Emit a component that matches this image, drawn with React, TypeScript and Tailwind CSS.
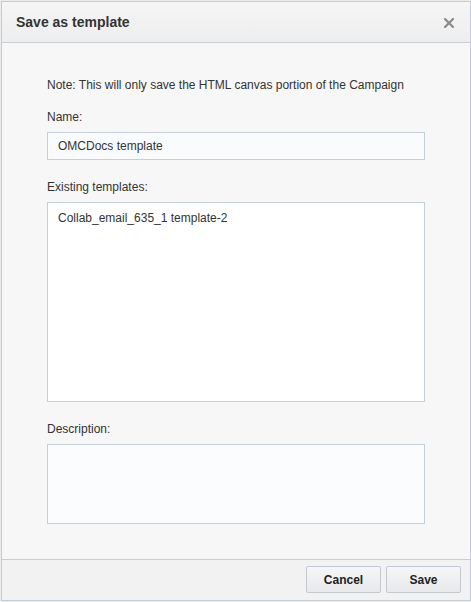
import React from 'react';

const font = { fontFamily: '"Liberation Sans", Arial, sans-serif' };

const SaveTemplateDialog: React.FC = () => {
  return (
    <div className="w-[471px] h-[602px] bg-[#ececec] overflow-hidden" style={font}>
      <div className="mt-[1px] ml-[1px] w-[470px] h-[600px] flex flex-col border border-[#c3cbd3] bg-[#f7f7f7] text-[#333]">
        {/* header */}
        <div className="h-[41px] shrink-0 flex items-center justify-between pl-[14px] pr-[16px] border-b border-[#c6ced6] bg-gradient-to-b from-[#f5f5f5] to-[#eeeeee]">
          <span className="text-[14px] font-bold text-[#333]">Save as template</span>
          <svg width="10" height="10" viewBox="0 0 10 10" className="mt-[1px]">
            <path d="M1 1 L9 9 M9 1 L1 9" stroke="#8a8a8a" strokeWidth="2.2" strokeLinecap="square" />
          </svg>
        </div>

        {/* body */}
        <div className="flex-1 px-[45px] pt-[35px] text-[12px] leading-[14px]">
          <p>Note: This will only save the HTML canvas portion of the Campaign</p>

          <p className="mt-[18px]">Name:</p>
          <div className="mt-[8px] h-[28px] flex items-center px-[10px] border border-[#c5d0da] bg-[#fafbfc]">
            OMCDocs template
          </div>

          <p className="mt-[20px]">Existing templates:</p>
          <div className="mt-[8px] h-[200px] px-[10px] pt-[8px] border border-[#c5d0da] bg-white">
            Collab_email_635_1 template-2
          </div>

          <p className="mt-[20px]">Description:</p>
          <div className="mt-[8px] h-[80px] border border-[#c5d0da] bg-[#fafcfe]" />
        </div>

        {/* footer */}
        <div className="h-[41px] shrink-0 flex items-start justify-end gap-[5px] pr-[9px] pt-[6px] border-t border-[#c8cdd2] bg-[#f2f2f2]">
          <button className="w-[75px] h-[27px] rounded-[2px] border border-[#c2c9d0] bg-gradient-to-b from-[#f5f6f7] to-[#e7e9eb] text-[12px] font-bold text-[#222]">
            Cancel
          </button>
          <button className="w-[75px] h-[27px] rounded-[2px] border border-[#c2c9d0] bg-gradient-to-b from-[#f5f6f7] to-[#e7e9eb] text-[12px] font-bold text-[#222]">
            Save
          </button>
        </div>
      </div>
    </div>
  );
};

export default function App() {
  return <SaveTemplateDialog />;
}
